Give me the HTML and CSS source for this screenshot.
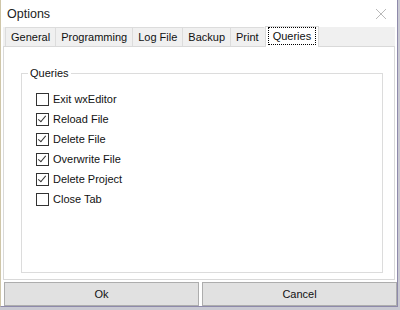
FILE: index.html
```html
<!DOCTYPE html>
<html lang="en">
<head>
  <meta charset="UTF-8" />
  <title>Options</title>
  <link rel="stylesheet" href="styles.css">
</head>
<body>
  <div class="window">
    <div class="titlebar">
      <span class="title">Options</span>
      <svg class="close" width="12" height="12" viewBox="0 0 12 12">
        <path d="M1 1 L11 11 M11 1 L1 11" stroke="#b9b9b9" stroke-width="1" />
      </svg>
    </div>

    <div class="notebook">
      <div class="tabs">
        <div class="tab">General</div>
        <div class="tab">Programming</div>
        <div class="tab">Log File</div>
        <div class="tab">Backup</div>
        <div class="tab">Print</div>
        <div class="tab active"><span class="focus">Queries</span></div>
      </div>

      <div class="panel">
        <fieldset class="group">
          <legend>Queries</legend>
          <label class="check"><span class="box"></span>Exit wxEditor</label>
          <label class="check"><span class="box on"></span>Reload File</label>
          <label class="check"><span class="box on"></span>Delete File</label>
          <label class="check"><span class="box on"></span>Overwrite File</label>
          <label class="check"><span class="box on"></span>Delete Project</label>
          <label class="check"><span class="box"></span>Close Tab</label>
        </fieldset>
      </div>
    </div>

    <div class="buttons">
      <button class="btn">Ok</button>
      <button class="btn">Cancel</button>
    </div>
  </div>
</body>
</html>
```

FILE: styles.css
```css
body {
  margin: 0;
  background-color: #c9c9d2;
  font-family: "Liberation Sans", Arial, sans-serif;
  font-size: 11px;
  color: #000;
}

.window {
  width: 396px;
  height: 306px;
  background-color: #fff;
  border-left: 1px solid #cfc6a8;
  border-right: 1px solid #8e8aab;
  border-bottom: 1px solid #8e8aab;
  display: flex;
  flex-direction: column;
}

.titlebar {
  height: 27px;
  display: flex;
  align-items: center;
  justify-content: space-between;
  padding: 0 10px 0 6px;
}

.title {
  font-size: 12.5px;
  color: #222;
}

.notebook {
  margin: 0 2px 0 2px;
  display: flex;
  flex-direction: column;
}

.tabs {
  display: flex;
  background-color: #f0f0f0;
  height: 19px;
  align-items: flex-end;
  padding-left: 2px;
}

.tab {
  height: 18px;
  line-height: 18px;
  padding: 0 5px;
  border-left: 1px solid #dcdcdc;
  border-top: 1px solid #dcdcdc;
  color: #111;
}

.tab:last-child {
  border-right: 1px solid #dcdcdc;
}

.tab.active {
  background-color: #fff;
  height: 20px;
  margin-left: 1px;
  margin-bottom: -1px;
  padding: 0 2px;
  line-height: 17px;
  border: 1px solid #d9d9d9;
  border-bottom: none;
  position: relative;
}

.focus {
  display: inline-block;
  padding: 0 4px;
  line-height: 16px;
  border: 1px dotted #000;
}

.panel {
  height: 234px;
  border: 1px solid #d9d9d9;
  background-color: #fff;
  padding: 20px 11px 0 17px;
  box-sizing: border-box;
}

.group {
  margin: 0;
  height: 206px;
  box-sizing: border-box;
  border: 1px solid #dcdcdc;
  padding: 10px 0 0 14px;
  display: flex;
  flex-direction: column;
}

.group legend {
  padding: 0 2px;
  margin-left: -8px;
  color: #111;
}

.check {
  display: flex;
  align-items: center;
  height: 20px;
  color: #111;
}

.box {
  width: 11px;
  height: 11px;
  border: 1px solid #333;
  margin-right: 4px;
  background-color: #fff;
  position: relative;
}

.box.on::after {
  content: "";
  position: absolute;
  left: 3px;
  top: 0px;
  width: 3px;
  height: 7px;
  border-right: 1px solid #333;
  border-bottom: 1px solid #333;
  transform: rotate(40deg);
}

.buttons {
  display: flex;
  gap: 3px;
  margin: 2px 0 0 3px;
}

.btn {
  flex: 1;
  height: 24px;
  background-color: #e1e1e1;
  border: 1px solid #adadad;
  font-family: "Liberation Sans", Arial, sans-serif;
  font-size: 11px;
  color: #111;
  padding: 0;
}
```
